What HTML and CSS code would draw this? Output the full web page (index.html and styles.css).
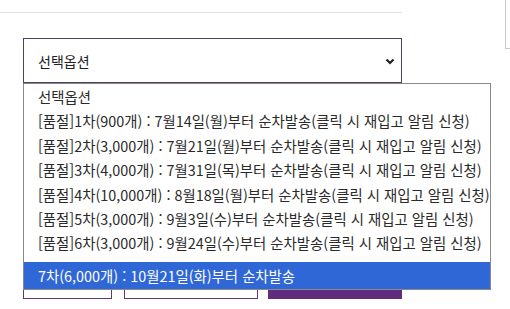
FILE: index.html
```html
<!DOCTYPE html>
<html lang="ko">
<head>
    <meta charset="UTF-8">
    <meta name="viewport" content="width=device-width, initial-scale=1.0">
    <title>선택옵션</title>
    <link rel="stylesheet" href="styles.css">
</head>
<body>
    <div class="page">
        <div class="main">
            <div class="divider"></div>

            <div class="option-box">
                <div class="select">
                    <span>선택옵션</span>
                    <svg class="chevron" width="10" height="7" viewBox="0 0 10 7">
                        <path d="M1.5 1.5 L5 5 L8.5 1.5" fill="none" stroke="#222" stroke-width="2.2"/>
                    </svg>
                </div>

                <ul class="dropdown">
                    <li>선택옵션</li>
                    <li>[품절]1차(900개) : 7월14일(월)부터 순차발송(클릭 시 재입고 알림 신청)</li>
                    <li>[품절]2차(3,000개) : 7월21일(월)부터 순차발송(클릭 시 재입고 알림 신청)</li>
                    <li>[품절]3차(4,000개) : 7월31일(목)부터 순차발송(클릭 시 재입고 알림 신청)</li>
                    <li>[품절]4차(10,000개) : 8월18일(월)부터 순차발송(클릭 시 재입고 알림 신청)</li>
                    <li>[품절]5차(3,000개) : 9월3일(수)부터 순차발송(클릭 시 재입고 알림 신청)</li>
                    <li>[품절]6차(3,000개) : 9월24일(수)부터 순차발송(클릭 시 재입고 알림 신청)</li>
                    <li class="active">7차(6,000개) : 10월21일(화)부터 순차발송</li>
                </ul>

                <!-- buttons sit under the open dropdown, only their bottom edge shows -->
                <div class="actions">
                    <button class="btn btn-small" aria-label="장바구니"></button>
                    <button class="btn" aria-label="관심상품"></button>
                    <button class="btn btn-buy" aria-label="구매하기"></button>
                </div>
            </div>
        </div>

        <div class="side-box"></div>
    </div>
</body>
</html>
```

FILE: styles.css
```css
body {
    margin: 0;
    padding: 0;
    font-family: "Noto Sans CJK KR", "Noto Sans", sans-serif;
    background-color: #fff;
    color: #222;
    overflow: hidden;
}

.page {
    display: flex;
    align-items: flex-start;
}

.main {
    width: 402px;
    flex-shrink: 0;
}

.divider {
    height: 12px;
    border-bottom: 1px solid #e2e2e2;
}

.side-box {
    margin-left: 103px;
    flex: 1;
    height: 48px;
    border-left: 1px solid #c8c8c8;
    border-bottom: 1px solid #c8c8c8;
}

.option-box {
    position: relative;
    margin-top: 25px;
    padding-left: 23px;
}

.select {
    height: 43px;
    border: 1px solid #4e3f60;
    display: flex;
    align-items: center;
    justify-content: space-between;
    padding: 0 6px 0 14px;
    font-size: 14px;
}

.chevron {
    margin-top: 2px;
}

.dropdown {
    position: absolute;
    top: 45px;
    left: 23px;
    width: 466px;
    margin: 0;
    padding: 1px 0 0;
    list-style: none;
    background: #fff;
    border: 1px solid #8a8a8a;
    z-index: 2;
}

.dropdown li {
    height: 24.4px;
    line-height: 24px;
    padding-left: 14px;
    font-size: 14.4px;
    color: #2a2a2a;
    white-space: nowrap;
}

.dropdown li.active {
    height: 27px;
    line-height: 27px;
    background-color: #2f67d6;
    color: #fff;
    margin-top: 6px;
}

.actions {
    display: flex;
    margin-top: 177px;
}

.btn {
    height: 39px;
    width: 134px;
    margin-right: 10px;
    background: #fff;
    border: 1px solid #5c3a76;
}

.btn-small {
    width: 89px;
    margin-right: 12px;
}

.btn-buy {
    margin-right: 0;
    background-color: #5f2d7b;
    border-color: #5f2d7b;
}
```
